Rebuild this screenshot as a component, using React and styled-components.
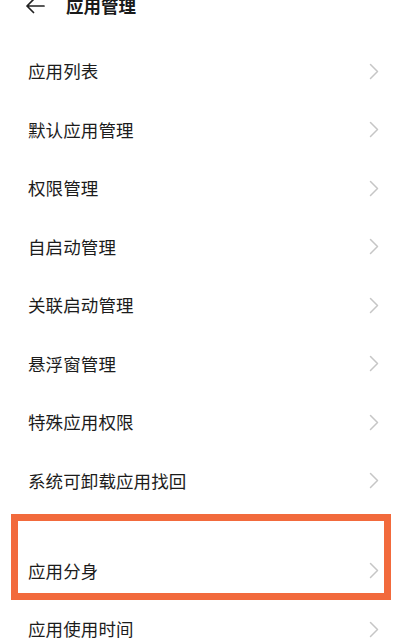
import styled, { createGlobalStyle } from 'styled-components';

const GlobalStyle = createGlobalStyle`
  html, body {
    margin: 0;
    padding: 0;
    background: #ffffff;
  }
  body {
    font-family: "Noto Sans CJK SC", "Noto Sans", sans-serif;
    color: #1f1f1f;
    overflow: hidden;
  }
`;

const mainItems = [
  '应用列表',
  '默认应用管理',
  '权限管理',
  '自启动管理',
  '关联启动管理',
  '悬浮窗管理',
  '特殊应用权限',
  '系统可卸载应用找回',
];

const moreItems = [
  { label: '应用分身', highlighted: true },
  { label: '应用使用时间' },
];

const Chevron = () => (
  <svg width="10" height="17" viewBox="0 0 10 17" fill="none">
    <path
      d="M1.5 1.5 L8.5 8.5 L1.5 15.5"
      stroke="#c6c6c6"
      strokeWidth="1.5"
      strokeLinecap="round"
      strokeLinejoin="round"
    />
  </svg>
);

const BackArrow = () => (
  <svg width="20" height="16" viewBox="0 0 20 16" fill="none">
    <path
      d="M19 8 H2 M8.5 1.5 L2 8 L8.5 14.5"
      stroke="#222"
      strokeWidth="1.7"
      strokeLinecap="round"
      strokeLinejoin="round"
    />
  </svg>
);

const App = () => {
  return (
    <>
      <GlobalStyle />
      <Screen>
        <Header>
          <BackButton>
            <BackArrow />
          </BackButton>
          <Title>应用管理</Title>
        </Header>

        <List>
          {mainItems.map((label) => (
            <Row key={label}>
              <Label>{label}</Label>
              <Chevron />
            </Row>
          ))}
        </List>

        <List $gap>
          {moreItems.map((item) => (
            <Row key={item.label}>
              {item.highlighted && <Highlight />}
              <Label>{item.label}</Label>
              <Chevron />
            </Row>
          ))}
        </List>
      </Screen>
    </>
  );
};

export default App;

const Screen = styled.div`
  width: 400px;
  height: 638px;
  overflow: hidden;
  background: #ffffff;
`;

const Header = styled.div`
  height: 44px;
  margin-top: -16px;
  display: flex;
  align-items: center;
  padding-left: 25px;
`;

const BackButton = styled.div`
  width: 20px;
  height: 16px;
  display: flex;
  align-items: center;
  margin-right: 21px;
`;

const Title = styled.h1`
  margin: 0;
  font-size: 17.5px;
  font-weight: 600;
  color: #1a1a1a;
  line-height: 1;
`;

const List = styled.div`
  display: flex;
  flex-direction: column;
  padding-top: ${(p) => (p.$gap ? '31.5px' : '13.75px')};
`;

const Row = styled.div`
  position: relative;
  height: 58.5px;
  display: flex;
  align-items: center;
  justify-content: space-between;
  padding: 0 21px 0 28px;
`;

const Label = styled.span`
  font-size: 17.5px;
  line-height: 1;
  color: #1c1c1c;
  letter-spacing: 0.1px;
`;

const Highlight = styled.div`
  position: absolute;
  top: -27px;
  bottom: 0;
  left: 11px;
  right: 9px;
  border: 7px solid #f26a3c;
  pointer-events: none;
`;
